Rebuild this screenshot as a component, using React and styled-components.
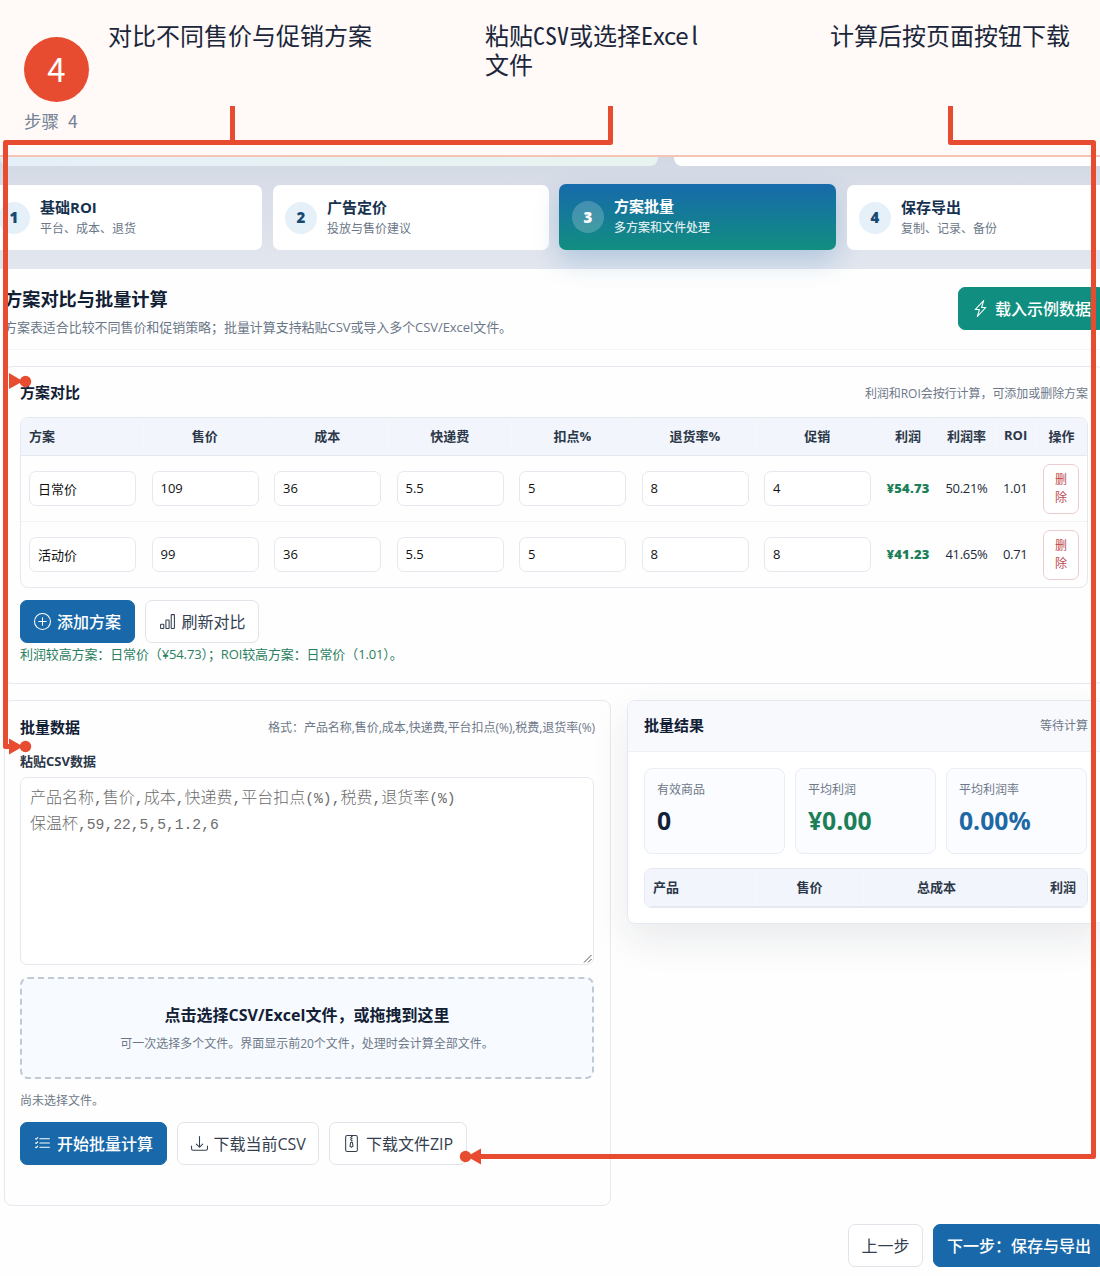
import React from "react";
import styled, { createGlobalStyle, css } from "styled-components";
import {
  BsLightningCharge,
  BsPlusCircle,
  BsBarChart,
  BsListCheck,
  BsDownload,
  BsFileZip,
} from "react-icons/bs";

const Global = createGlobalStyle`
  *, *::before, *::after { box-sizing: border-box; }
  body { margin: 0; background: #fefefe; }
  body, button, input, table {
    font-family: "Open Sans", "Noto Sans CJK SC", sans-serif;
  }
`;

const accent = "#e84c30";
const line = "#e5e8ee";

const Stage = styled.div`
  position: relative;
  width: 1100px;
  height: 1276px;
  overflow: hidden;
  color: #122035;
  background: #fefefe;
`;

const Banner = styled.header`
  position: relative;
  z-index: 1;
  display: grid;
  grid-template-columns: 108px 377px 345px 270px;
  height: 157px;
  background: #fffaf7;
  border-bottom: 2px solid #f5c4b5;
  font-family: "Noto Sans CJK SC", sans-serif;
`;

const StepMark = styled.div`
  padding: 37px 0 0 24px;
`;

const StepNumber = styled.div`
  display: flex;
  align-items: center;
  justify-content: center;
  width: 65px;
  height: 65px;
  padding-bottom: 3px;
  border-radius: 50%;
  background: ${accent};
  color: #fff;
  font-size: 33px;
  line-height: 1;
`;

const StepCaption = styled.div`
  margin-top: 6px;
  color: #748196;
  font-size: 17.5px;
  line-height: 26px;
  word-spacing: 5px;
`;

const Note = styled.p`
  margin: 22px 0 0;
  max-width: 245px;
  color: #1b263b;
  font-family: "Liberation Sans", "Noto Sans CJK SC", sans-serif;
  font-size: 24px;
  line-height: 29px;
  white-space: ${(p) => (p.$nowrap ? "nowrap" : "pre-line")};
`;

const Narrow = styled.span`
  font-family: "Noto Sans CJK SC", sans-serif;
  font-feature-settings: "hwid" 1;
  line-height: 1;
`;

const Wide = styled(Narrow)`
  font-feature-settings: normal;
  letter-spacing: -0.4px;
`;

const LoneStem = styled(Wide)`
  padding-left: 3px;
`;

const Hero = styled.div`
  display: flex;
  gap: 16px;
  height: 9px;
`;

const HeroCard = styled.div`
  flex: none;
  width: ${(p) => p.$width}px;
  background: ${(p) => (p.$tinted ? "linear-gradient(90deg, #e5eff8, #e8f4f0)" : "#fff")};
  border-radius: 0 0 8px 8px;
`;

const TopArea = styled.div`
  background: linear-gradient(180deg, #d3d9e4 0%, #d9dee8 35%, #e2e6ef 100%);
  height: 112px;
`;

const Tabs = styled.nav`
  display: grid;
  grid-template-columns: repeat(4, 275.5px);
  gap: 11.5px;
  margin: 19px 0 0 -14px;
`;

const Tab = styled.div`
  display: flex;
  align-items: center;
  gap: 10px;
  height: 65px;
  padding: 0 12px;
  border-radius: 7px;
  background: #fff;
  color: #17324f;
  ${(p) =>
    p.$active &&
    css`
      height: 66px;
      margin-top: -1px;
      margin-left: -1px;
      padding-left: 13px;
      color: #fff;
      background: linear-gradient(180deg, #176aab, #118e80);
      box-shadow: 0 12px 26px rgba(23, 105, 170, 0.22);
    `}
`;

const TabNumber = styled.span`
  display: grid;
  place-items: center;
  width: 32px;
  height: 32px;
  border-radius: 50%;
  background: ${(p) => (p.$active ? "rgba(255,255,255,.2)" : "#e6f0f9")};
  color: ${(p) => (p.$active ? "#fff" : "#174a73")};
  font-size: 15px;
  font-weight: 800;
  line-height: 1;
`;

const TabTitle = styled.div`
  font-size: 15px;
  font-weight: 700;
  line-height: 21px;
`;

const TabHint = styled.div`
  color: ${(p) => (p.$active ? "rgba(255,255,255,.85)" : "#6b7788")};
  font-size: 12px;
  font-weight: ${(p) => (p.$active ? 500 : 400)};
  line-height: 21px;
`;

const Content = styled.main`
  width: 1100px;
  margin-left: 4px;
`;

const PageHead = styled.div`
  display: flex;
  justify-content: space-between;
  align-items: flex-start;
  height: 81px;
  margin-right: -1px;
  padding-top: 17px;
  border-bottom: 1px solid #f3f4f6;
`;

const PageTitle = styled.h1`
  margin: 0;
  font-size: 18.2px;
  line-height: 26px;
`;

const PageText = styled.p`
  margin: 4px 0 0;
  color: #6b7788;
  font-size: 13px;
  letter-spacing: -0.06px;
  line-height: 22px;
`;

const tones = {
  primary: css`background: #1969aa; border-color: #1969aa; color: #fff; font-weight: 500;`,
  success: css`background: #108f80; border-color: #108f80; color: #fff; font-weight: 500; margin-top: 1.4px;`,
  plain: css`background: #fff; border-color: #e0e4ea; color: #34404f; padding: 0 12.5px;`,
};

const Button = styled.button`
  display: inline-flex;
  align-items: center;
  gap: 6px;
  flex: none;
  height: 43px;
  padding: 0 13px;
  border: 1px solid;
  border-radius: 7px;
  font-size: 16px;
  line-height: 24px;
  white-space: nowrap;
  & > svg { width: 17px; height: 17px; }
  ${(p) => tones[p.$tone || "plain"]}
`;

const Panel = styled.section`
  padding: 0 15px;
  border: 1px solid ${line};
  border-radius: 8px;
`;

const ComparePanel = styled(Panel)`
  height: 318px;
  margin-top: 16px;
`;

const PanelHead = styled.div`
  display: flex;
  align-items: center;
  justify-content: space-between;
  height: ${(p) => p.$height}px;
`;

const PanelTitle = styled.h2`
  margin: 0;
  font-size: 15px;
  line-height: 24px;
`;

const Muted = styled.span`
  color: #6d7888;
  font-size: 12px;
  line-height: 20px;
`;

const HeadNote = styled(Muted)`
  padding-top: 3px;
  letter-spacing: -0.05px;
`;

const TableFrame = styled.div`
  overflow: hidden;
  width: ${(p) => p.$width}px;
  border: 1px solid ${line};
  border-radius: 8px;
`;

const Table = styled.table`
  width: 100%;
  border-collapse: collapse;
  table-layout: fixed;
  font-size: 13px;
`;

const Th = styled.th`
  height: 37px;
  padding: 0 8px 2px;
  background: #f2f5fb;
  border-bottom: 1px solid ${line};
  color: #2c3849;
  font-weight: 700;
  text-align: ${(p) => p.$align || "center"};
  white-space: nowrap;
  & + & { border-left: 1px solid #f4f7fc; }
`;

const LastTh = styled(Th)`
  padding-right: 11px;
`;

const Td = styled.td`
  height: 66px;
  padding: 0 8px;
  border-top: 1px solid #f1f3f6;
  text-align: center;
`;

const ValueTd = styled(Td)`
  padding: 0;
  color: ${(p) => (p.$profit ? "#1c7f58" : "#1d2939")};
  font-weight: ${(p) => (p.$profit ? 800 : 400)};
  letter-spacing: ${(p) => (p.$profit ? "0.2px" : "-0.3px")};
`;

const Field = styled.input`
  display: block;
  width: 107px;
  height: 35px;
  padding: 0 8px;
  border: 1px solid ${line};
  border-radius: 7px;
  background: #fff;
  color: #111;
  font-size: 13px;
`;

const Remove = styled.button`
  display: block;
  width: 36px;
  height: 50px;
  margin-top: 2px;
  padding: 0 10px;
  border: 1px solid #ebcccf;
  border-radius: 7px;
  background: #fff;
  color: #bd4a4d;
  font-size: 12px;
  line-height: 18px;
`;

const Actions = styled.div`
  display: flex;
  gap: 10px;
  margin-top: ${(p) => p.$top}px;
`;

const Summary = styled.p`
  margin: 0;
  color: #2a8060;
  font-size: 13px;
  letter-spacing: -0.12px;
  line-height: 22px;
`;

const Columns = styled.div`
  display: grid;
  grid-template-columns: 607px 477px;
  gap: 16px;
  align-items: start;
  margin-top: 16px;
`;

const BatchPanel = styled(Panel)`
  height: 506px;
`;

const FieldLabel = styled.div`
  margin-top: -1px;
  color: #2c3849;
  font-size: 13px;
  font-weight: 700;
  line-height: 20px;
`;

const CsvBox = styled.div`
  position: relative;
  width: 574px;
  height: 188px;
  margin-top: 6px;
  padding: 6px 9px;
  border: 1px solid ${line};
  border-radius: 7px;
  background: #fff;
  color: #6c6c6c;
  font-family: "Noto Sans CJK SC", sans-serif;
  font-size: 16px;
  font-weight: 300;
  line-height: 25.6px;
  white-space: pre;
`;

const Mono = styled.span`
  font-family: "Liberation Mono", monospace;
  font-size: 14.67px;
  font-weight: 400;
  line-height: 1;
`;

const Grip = styled.svg`
  position: absolute;
  right: 0;
  bottom: 0;
`;

const DropZone = styled.div`
  display: flex;
  flex-direction: column;
  align-items: center;
  justify-content: center;
  gap: 6px;
  width: 574px;
  height: 102px;
  margin-top: 12px;
  border: 2px dashed #c0cad6;
  border-radius: 8px;
  background: #f7fbff;
`;

const DropTitle = styled.strong`
  font-size: 16px;
  line-height: 25px;
`;

const FileState = styled.div`
  margin-top: 12px;
  color: #6d7888;
  font-size: 12px;
  line-height: 20px;
`;

const ResultPanel = styled.section`
  height: 224px;
  overflow: hidden;
  border: 1px solid ${line};
  border-radius: 8px;
  background: #fff;
`;

const ResultShadow = styled.div`
  border-radius: 8px;
  box-shadow: 0 16px 38px rgba(20, 32, 50, 0.09);
`;

const ResultHead = styled(PanelHead)`
  padding: 0 15px 2px 16px;
  background: #f7f9fd;
  border-bottom: 1px solid #eceff4;
`;

const ResultState = styled(Muted)`
  padding-top: 2px;
`;

const Stats = styled.div`
  display: grid;
  grid-template-columns: repeat(3, 141px);
  gap: 10px;
  margin: 16px 0 14px 16px;
`;

const Stat = styled.div`
  height: 86px;
  padding: 8px 12px;
  border: 1px solid #eaedf3;
  border-radius: 8px;
  background: #fafcff;
`;

const StatValue = styled.div`
  margin-top: 3px;
  color: ${(p) => p.$color};
  font-size: 24.7px;
  font-weight: 700;
  line-height: 36px;
`;

const ResultTable = styled.div`
  margin-left: 16px;
`;

const Pager = styled.div`
  display: flex;
  justify-content: flex-end;
  gap: 10px;
  margin: 18px -1px 0 0;
`;

const Overlay = styled.svg`
  position: absolute;
  z-index: 2;
  inset: 0;
  pointer-events: none;
`;

const steps = [
  ["基础ROI", "平台、成本、退货"],
  ["广告定价", "投放与售价建议"],
  ["方案批量", "多方案和文件处理"],
  ["保存导出", "复制、记录、备份"],
];

const plans = [
  { values: ["日常价", "109", "36", "5.5", "5", "8", "4"], profit: "¥54.73", rate: "50.21%", roi: "1.01" },
  { values: ["活动价", "99", "36", "5.5", "5", "8", "8"], profit: "¥41.23", rate: "41.65%", roi: "0.71" },
];

const planHeads = ["方案", "售价", "成本", "快递费", "扣点%", "退货率%", "促销", "利润", "利润率", "ROI", "操作"];
const planWidths = [122.5, 122.5, 122.5, 122.5, 122.5, 122.5, 122.5, 59, 58, 39.5, 52.5];

const stats = [
  ["有效商品", "0", "#122038"],
  ["平均利润", "¥0.00", "#1c7f58"],
  ["平均利润率", "0.00%", "#1d68a5"],
];

const csvHint = "产品名称,售价,成本,快递费,平台扣点(%),税费,退货率(%)\n保温杯,59,22,5,5,1.2,6";

function MixedText({ text }) {
  return text
    .split(/([\x21-\x7e]+)/)
    .map((part, i) => (i % 2 ? <Mono key={i}>{part}</Mono> : part));
}

function CalloutLines() {
  return (
    <Overlay width="1100" height="1276" viewBox="0 0 1100 1276">
      <g fill="none" stroke={accent} strokeWidth="5" strokeLinejoin="round">
        <path d="M232.5 106V142.5" />
        <path d="M610.5 106V142.5H5.5V746.5H12" />
        <path d="M950.5 106V142.5H1093.5V1156.5H478" />
      </g>
      <g fill={accent}>
        <path d="M9 373L23 381.3L9 389Z" />
        <circle cx="25.5" cy="381.5" r="5.7" />
        <path d="M9 738.5L23 746.5L9 754.5Z" />
        <circle cx="25.5" cy="746.5" r="5.7" />
        <path d="M481 1148.5L467 1156.5L481 1164.5Z" />
        <circle cx="465.5" cy="1156.5" r="5.7" />
      </g>
    </Overlay>
  );
}

export default function App() {
  return (
    <Stage>
      <Global />
      <Banner>
        <StepMark>
          <StepNumber>4</StepNumber>
          <StepCaption>步骤 4</StepCaption>
        </StepMark>
        <Note $nowrap>对比不同售价与促销方案</Note>
        <Note>
          粘贴<Narrow>CSV</Narrow>或选择<Narrow>E</Narrow><Wide>xce</Wide><LoneStem>l</LoneStem>{"\n文件"}
        </Note>
        <Note>计算后按页面按钮下载</Note>
      </Banner>

      <TopArea>
        <Hero>
          <HeroCard $width={658} $tinted />
          <HeroCard $width={440} />
        </Hero>
        <Tabs>
          {steps.map(([title, hint], i) => {
            const active = i === 2;
            return (
              <Tab key={title} $active={active}>
                <TabNumber $active={active}>{i + 1}</TabNumber>
                <div>
                  <TabTitle>{title}</TabTitle>
                  <TabHint $active={active}>{hint}</TabHint>
                </div>
              </Tab>
            );
          })}
        </Tabs>
      </TopArea>

      <Content>
        <PageHead>
          <div>
            <PageTitle>方案对比与批量计算</PageTitle>
            <PageText>方案表适合比较不同售价和促销策略；批量计算支持粘贴CSV或导入多个CSV/Excel文件。</PageText>
          </div>
          <Button $tone="success"><BsLightningCharge />载入示例数据</Button>
        </PageHead>

        <ComparePanel>
          <PanelHead $height={50}>
            <PanelTitle>方案对比</PanelTitle>
            <HeadNote>利润和ROI会按行计算，可添加或删除方案</HeadNote>
          </PanelHead>
          <TableFrame $width={1068}>
            <Table>
              <colgroup>
                {planWidths.map((w, i) => <col key={i} width={w} />)}
              </colgroup>
              <thead>
                <tr>
                  {planHeads.map((h, i) => (
                    <Th key={h} $align={i === 0 ? "left" : "center"}>{h}</Th>
                  ))}
                </tr>
              </thead>
              <tbody>
                {plans.map((p) => (
                  <tr key={p.values[0]}>
                    {p.values.map((v, i) => (
                      <Td key={i}><Field defaultValue={v} /></Td>
                    ))}
                    <ValueTd $profit>{p.profit}</ValueTd>
                    <ValueTd>{p.rate}</ValueTd>
                    <ValueTd>{p.roi}</ValueTd>
                    <Td><Remove>删除</Remove></Td>
                  </tr>
                ))}
              </tbody>
            </Table>
          </TableFrame>
          <Actions $top={12}>
            <Button $tone="primary"><BsPlusCircle />添加方案</Button>
            <Button><BsBarChart />刷新对比</Button>
          </Actions>
          <Summary>利润较高方案：日常价（¥54.73）；ROI较高方案：日常价（1.01）。</Summary>
        </ComparePanel>

        <Columns>
          <BatchPanel>
            <PanelHead $height={51}>
              <PanelTitle>批量数据</PanelTitle>
              <HeadNote>格式：产品名称,售价,成本,快递费,平台扣点(%),税费,退货率(%)</HeadNote>
            </PanelHead>
            <FieldLabel>粘贴CSV数据</FieldLabel>
            <CsvBox>
              <MixedText text={csvHint} />
              <Grip width="10" height="10" viewBox="0 0 10 10" stroke="#555" strokeWidth="1">
                <path d="M1 8.5L8.5 1M5 8.5L8.5 5" />
              </Grip>
            </CsvBox>
            <DropZone>
              <DropTitle>点击选择CSV/Excel文件，或拖拽到这里</DropTitle>
              <Muted>可一次选择多个文件。界面显示前20个文件，处理时会计算全部文件。</Muted>
            </DropZone>
            <FileState>尚未选择文件。</FileState>
            <Actions $top={11}>
              <Button $tone="primary"><BsListCheck />开始批量计算</Button>
              <Button><BsDownload />下载当前CSV</Button>
              <Button><BsFileZip />下载文件ZIP</Button>
            </Actions>
          </BatchPanel>

          <ResultShadow>
            <ResultPanel>
              <ResultHead $height={51}>
                <PanelTitle>批量结果</PanelTitle>
                <ResultState>等待计算</ResultState>
              </ResultHead>
              <Stats>
                {stats.map(([label, value, color]) => (
                  <Stat key={label}>
                    <Muted>{label}</Muted>
                    <StatValue $color={color}>{value}</StatValue>
                  </Stat>
                ))}
              </Stats>
              <ResultTable>
                <TableFrame $width={444}>
                  <Table>
                    <colgroup>
                      <col width="111" />
                      <col width="107" />
                      <col width="147" />
                      <col width="77" />
                    </colgroup>
                    <thead>
                      <tr>
                        <Th $align="left">产品</Th>
                        <Th>售价</Th>
                        <Th>总成本</Th>
                        <LastTh $align="right">利润</LastTh>
                      </tr>
                    </thead>
                  </Table>
                </TableFrame>
              </ResultTable>
            </ResultPanel>
          </ResultShadow>
        </Columns>

        <Pager>
          <Button>上一步</Button>
          <Button $tone="primary">下一步：保存与导出</Button>
        </Pager>
      </Content>

      <CalloutLines />
    </Stage>
  );
}
